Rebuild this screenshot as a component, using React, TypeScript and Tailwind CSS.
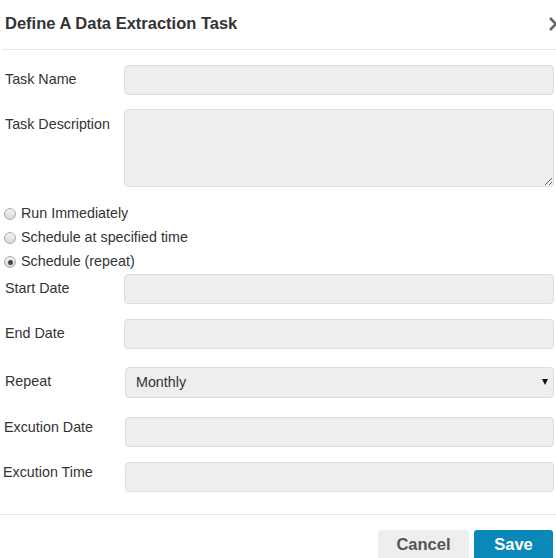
import React from "react";

function Radio({ label, checked }: { label: string; checked?: boolean }) {
  return (
    <label className="flex items-center h-[24px] pl-[4px] gap-[5px]">
      <span className="w-[12px] h-[12px] rounded-full border border-[#a9a9a9] bg-gradient-to-b from-[#f4f4f4] to-[#d8d8d8] flex items-center justify-center">
        {checked && <span className="w-[5px] h-[5px] rounded-full bg-[#444]" />}
      </span>
      <span>{label}</span>
    </label>
  );
}

export default function App() {
  const field =
    "h-[30px] w-[430px] rounded-[4px] border border-[#dddddd] bg-[#eeeeee] outline-none";

  return (
    <div className="w-[556px] h-[558px] overflow-hidden bg-white text-[#333] text-[14.3px] font-['Liberation_Sans',Arial,sans-serif]">

      {/* Header */}
      <div className="h-[50px] ml-[2px] flex items-center justify-between border-b border-[#e5e5e5] pl-[3px]">
        <h2 className="text-[16.5px] font-bold text-[#333] pb-[2px]">
          Define A Data Extraction Task
        </h2>
        <svg width="10" height="16" viewBox="0 0 10 16" className="mr-[-2px] mb-[2px]">
          <path d="M2 2 L8 8 L2 14" fill="none" stroke="#666" strokeWidth="2.6" />
        </svg>
      </div>

      {/* Form */}
      <div className="pt-[15px]">
        <div className="flex items-center">
          <div className="w-[124px] pl-[5px] pb-[1px]">Task Name</div>
          <input className={field} />
        </div>

        <div className="flex mt-[14px]">
          <div className="w-[124px] pl-[5px] pt-[5px]">Task Description</div>
          <textarea className="h-[78px] w-[430px] rounded-[4px] border border-[#dddddd] bg-[#eeeeee] outline-none" />
        </div>

        <div className="mt-[15px]">
          <Radio label="Run Immediately" />
          <Radio label="Schedule at specified time" />
          <Radio label="Schedule (repeat)" checked />
        </div>

        <div className="flex items-center">
          <div className="w-[124px] pl-[5px] pb-[1px]">Start Date</div>
          <input className={field} />
        </div>

        <div className="flex items-center mt-[15px]">
          <div className="w-[124px] pl-[5px] pb-[1px]">End Date</div>
          <input className={field} />
        </div>

        <div className="flex items-center mt-[18px]">
          <div className="w-[125px] pl-[5px] pb-[2px]">Repeat</div>
          <div className="relative">
            <select className="appearance-none h-[31px] w-[429px] rounded-[4px] border border-[#dddddd] bg-[#eeeeee] pl-[10px] text-[#333] outline-none">
              <option>Monthly</option>
            </select>
            <span className="absolute right-[6px] top-[12px] w-0 h-0 border-l-[3.5px] border-r-[3.5px] border-t-[6px] border-l-transparent border-r-transparent border-t-[#111]" />
          </div>
        </div>

        <div className="flex mt-[19px]">
          <div className="w-[125px] pl-[4px]">Excution Date</div>
          <input className="h-[30px] w-[429px] rounded-[4px] border border-[#dddddd] bg-[#eeeeee] outline-none" />
        </div>

        <div className="flex mt-[15px]">
          <div className="w-[125px] pl-[3px]">Excution Time</div>
          <input className="h-[30px] w-[429px] rounded-[4px] border border-[#dddddd] bg-[#eeeeee] outline-none" />
        </div>
      </div>

      {/* Footer */}
      <div className="mt-[22px] border-t border-[#e5e5e5] pt-[15px] flex justify-end gap-[5px] pr-[3px]">
        <button className="w-[91px] h-[34px] rounded-[3px] bg-[#eeeeee] text-[#555] text-[16.5px] font-bold pb-[5px]">
          Cancel
        </button>
        <button className="w-[79px] h-[34px] rounded-[3px] bg-[#0a88b9] text-white text-[16.5px] font-bold pb-[5px]">
          Save
        </button>
      </div>

    </div>
  );
}
